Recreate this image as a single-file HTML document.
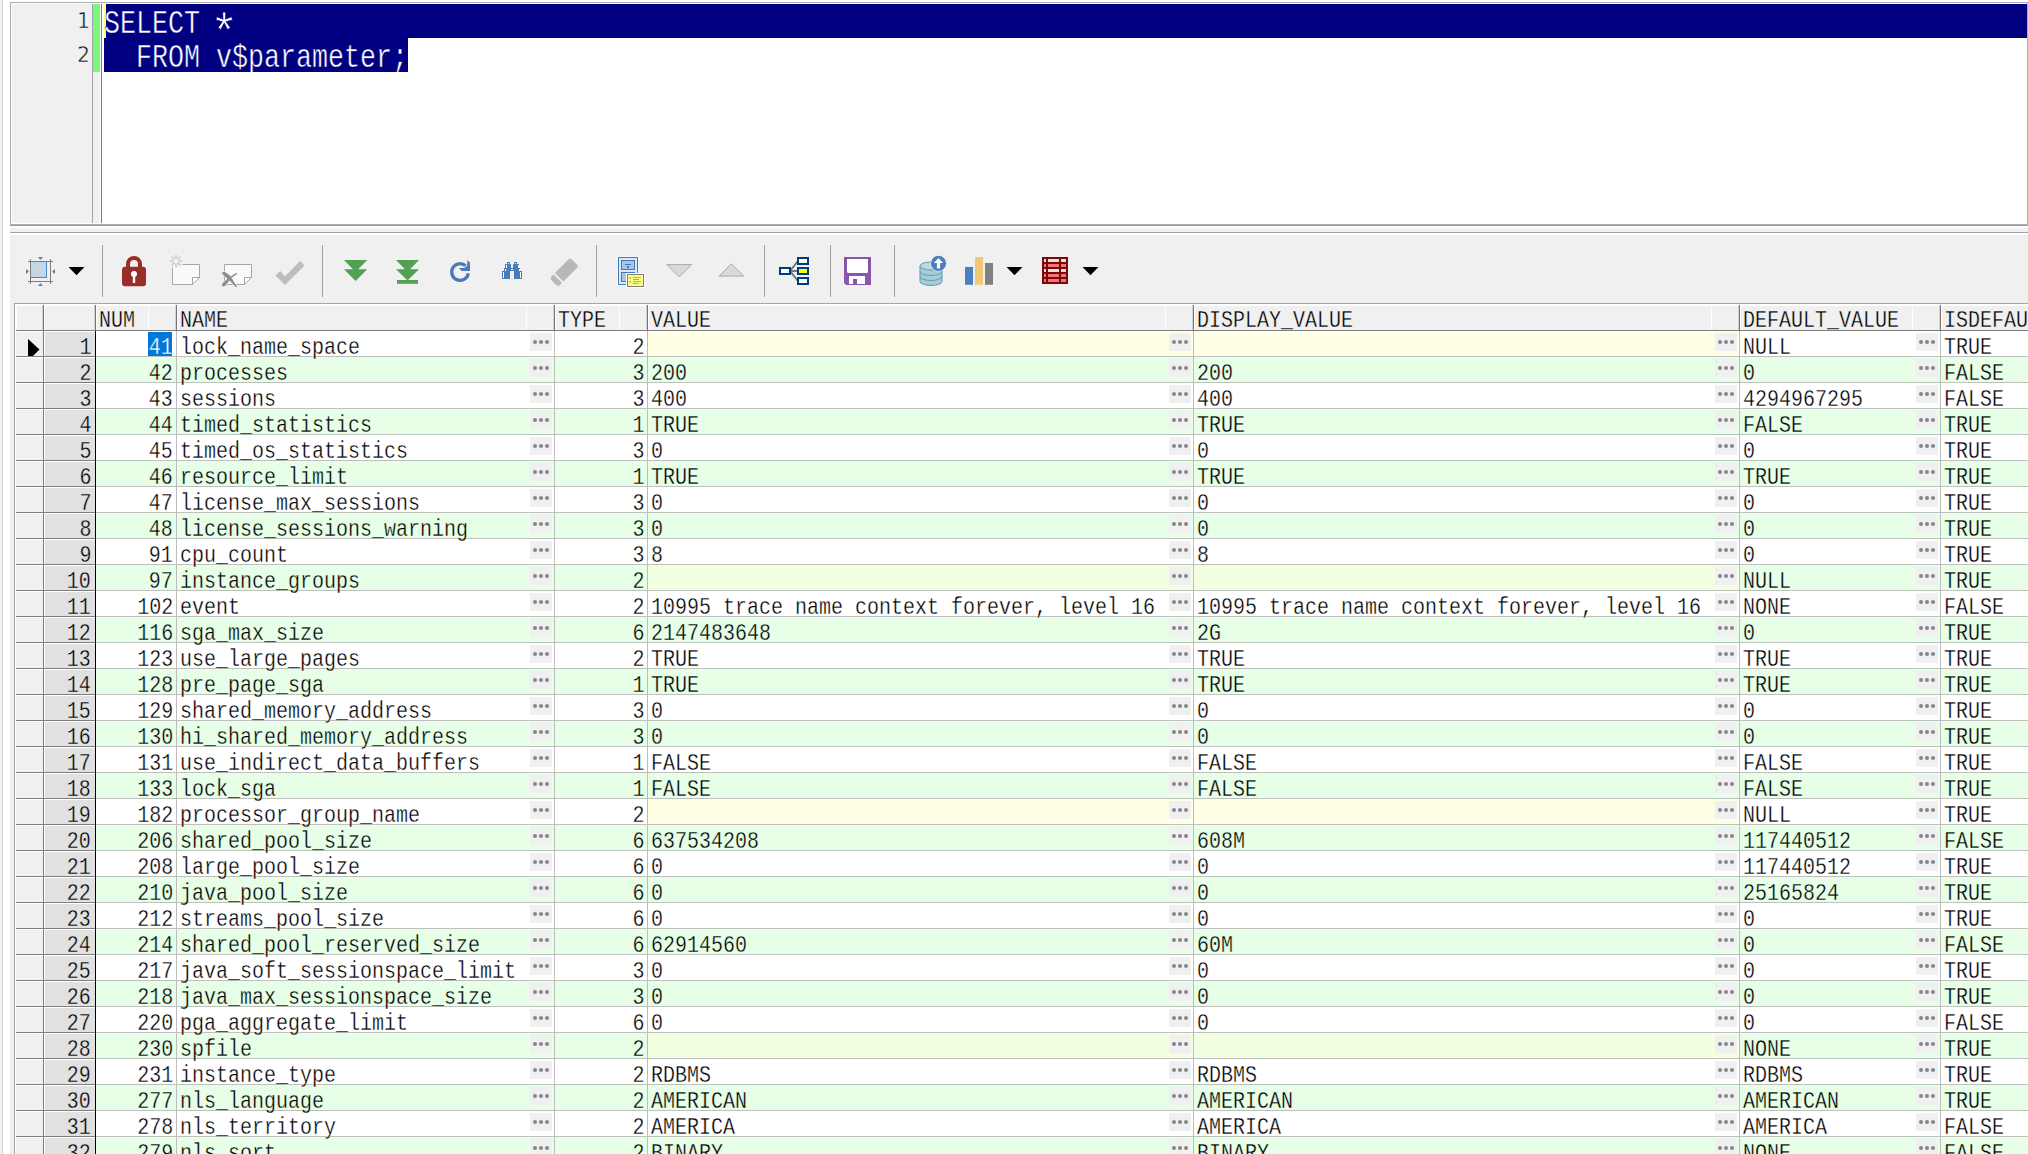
<!DOCTYPE html>
<html lang="en">
<head>
<meta charset="utf-8">
<title>SQL Window - SELECT * FROM v$parameter</title>
<style>
html,body{margin:0;padding:0;}
body{width:2028px;height:1154px;overflow:hidden;background:#fff;position:relative;font-family:"Liberation Mono",monospace;color:#000;}
div,span{box-sizing:border-box;}
.abs{position:absolute;}
#leftedge{position:absolute;left:0;top:0;width:3px;height:1154px;background:#f0f0f0;border-right:1px solid #d6d6d6;}
#editor{position:absolute;left:10px;top:2px;width:2018px;height:223px;border:1px solid #abadb3;background:#fff;overflow:hidden;}
#editorshadow{position:absolute;left:10px;top:225px;width:2018px;height:1px;background:#9c9c9c;}
#gutter{position:absolute;left:1px;top:1px;width:80px;height:219px;background:#f0f0f0;}
#gutline1{position:absolute;left:81px;top:1px;width:1px;height:219px;background:#a6a0a8;}
#modbar{position:absolute;left:82px;top:1px;width:7px;height:68px;background:#79f879;}
#gutpad{position:absolute;left:82px;top:69px;width:7px;height:151px;background:#f0f0f0;}
#gutline2{position:absolute;left:90px;top:1px;width:1px;height:219px;background:#7a7a7a;}
.lnum{position:absolute;left:1px;width:78px;text-align:right;font-family:"DejaVu Sans","Liberation Sans",sans-serif;font-size:20.5px;line-height:34px;height:34px;color:#111;}
.sel{position:absolute;background:#000080;height:34px;}
.ast{display:inline-block;transform:translateY(10px) scale(1.75,1.5);}
.lnum{-webkit-text-stroke:.5px #f0f0f0;}
.codeline{position:absolute;left:93px;height:34px;width:1923px;overflow:hidden;}
.code{position:absolute;left:0;top:0;height:34px;line-height:34px;font-size:33.5px;color:#fff;white-space:pre;transform:scaleX(.7959);transform-origin:0 50%;margin-top:2.5px;}
#caret{position:absolute;left:93px;top:1px;width:2px;height:34px;background:#ffff7a;}
#splitter{position:absolute;left:10px;top:228px;width:2018px;height:4px;background:#f0f0f0;}
#panel{position:absolute;left:10px;top:232px;width:2018px;height:922px;background:#f0f0f0;border-top:1px solid #a0a0a0;}
#panelhl{position:absolute;left:0;top:0;width:2018px;height:2px;background:#fff;}
.tsep{position:absolute;top:12px;width:1px;height:52px;background:#a0a0a0;}
#icons{position:absolute;left:0;top:0;}
#grid{position:absolute;left:14px;top:303px;width:2030px;height:900px;border:1px solid #a2a5ad;background:#fff;overflow:hidden;font-size:24px;}
.t{position:absolute;z-index:1;white-space:pre;line-height:26px;height:26px;transform:scaleX(.83333);}
.tl{transform-origin:0 50%;}
.tr{transform-origin:100% 50%;}
.hc{position:absolute;top:2px;height:24px;background:#f0f0f0;}
.hs{position:absolute;top:1px;width:1px;height:26px;background:#747474;box-shadow:-1px 0 0 #d4d4d4;}
.hw{position:absolute;top:2px;width:1px;height:24px;background:#fff;}
.row{position:absolute;left:0;width:2030px;height:26px;}
.ind{position:absolute;left:1px;top:1px;width:27px;height:24px;background:#f0f0f0;}
.rn{position:absolute;left:30px;top:1px;width:50px;height:24px;background:#e1e1e1;}
.fl{position:absolute;left:1px;top:25px;width:79px;height:1px;background:#7e7e7e;}
.fv{position:absolute;left:28px;top:0;width:1px;height:26px;background:#7e7e7e;}
.c{position:absolute;top:0;height:25px;}
.even .c{background:#e6ffe6;}
.odd .c{background:#fff;}
.odd .c.n{background:#ffffe6;}
.even .c.n{background:#f2ffe0;}
.hl{position:absolute;left:81px;top:25px;width:1950px;height:1px;background:#bfbfbf;}
.b{position:absolute;top:2px;width:22px;height:18px;background:#f0f0f0;}
.b i{position:absolute;top:7px;width:4px;height:4px;border-radius:2px;background:#868686;}
.vl{position:absolute;top:27px;width:1px;height:900px;background:#bdbdbd;}
#blackline{position:absolute;left:80px;top:27px;width:1px;height:900px;background:#000;}
.selcell{position:absolute;background:#0078d7;}
.t{-webkit-text-stroke:.35px #f0f0f0;}
.row>.t{-webkit-text-stroke:.35px #e1e1e1;}
.code{-webkit-text-stroke:.5px #000080;}
.odd .c .t{-webkit-text-stroke:.35px #fff;}
.even .c .t{-webkit-text-stroke:.35px #e6ffe6;}

</style>
</head>
<body>
<div id="leftedge"></div>

<div id="editor">
<div id="gutter"></div><div id="gutline1"></div><div id="modbar"></div><div id="gutpad"></div><div id="gutline2"></div>
<div class="lnum" style="top:1px">1</div><div class="lnum" style="top:35px">2</div>
<div class="sel" style="left:93px;top:1px;width:1923px"></div>
<div class="sel" style="left:93px;top:35px;width:304px"></div>
<div id="caret"></div>
<div class="codeline" style="top:1px"><div class="code">SELECT <span class="ast">*</span></div></div>
<div class="codeline" style="top:35px"><div class="code">  FROM v$parameter;</div></div>
</div>
<div id="editorshadow"></div>
<div id="splitter"></div>
<div id="panel"><div id="panelhl"></div>
<div class="tsep" style="left:92px"></div>
<div class="tsep" style="left:312px"></div>
<div class="tsep" style="left:586px"></div>
<div class="tsep" style="left:754px"></div>
<div class="tsep" style="left:820px"></div>
<div class="tsep" style="left:884px"></div>
</div>
<svg id="icons" class="abs" width="2028" height="310" viewBox="0 0 2028 310">
<!-- select/fit icon -->
<g shape-rendering="crispEdges">
<rect x="31" y="262" width="16" height="16" fill="#c6d6e6"/>
<rect x="46" y="262" width="1" height="16" fill="#4a86c8"/>
<rect x="31" y="277" width="16" height="1" fill="#4a86c8"/>
<rect x="30" y="259" width="1" height="25" fill="#7d7d7d"/>
<rect x="50" y="259" width="1" height="25" fill="#7d7d7d"/>
<rect x="28" y="261" width="25" height="1" fill="#7d7d7d"/>
<rect x="28" y="281" width="25" height="1" fill="#7d7d7d"/>
</g>
<polygon points="38,257 43,257 40.5,260" fill="#4a86c8"/>
<polygon points="38,286 43,286 40.5,283" fill="#4a86c8"/>
<polygon points="26,269 26,274 29,271.5" fill="#4a86c8"/>
<polygon points="55,269 55,274 52,271.5" fill="#4a86c8"/>
<!-- dropdown arrows -->
<polygon points="68.5,267 84.5,267 76.5,275.2" fill="#000"/>
<polygon points="1006.5,267 1022.5,267 1014.5,275.2" fill="#000"/>
<polygon points="1082.5,267 1098.5,267 1090.5,275.2" fill="#000"/>
<!-- lock -->
<path d="M126,267 v-3 a8,8 0 0 1 16,0 v3 h-4 v-3 a4,4 0 0 0 -8,0 v3 z" fill="#9b2d27"/>
<rect x="122" y="266.8" width="24" height="19.4" rx="3" fill="#9b2d27"/>
<circle cx="134" cy="274" r="3" fill="#fff"/>
<rect x="132.8" y="275" width="2.4" height="8" fill="#fff"/>
<!-- new record -->
<path d="M172.5,264.5 h27 v13 l-7,7 h-20 z" fill="#fafafa"/>
<path d="M199.5,277.5 h-7 v7 z" fill="#fff"/>
<path d="M199.5,277.5 h-7 v7 M172.5,264.5 h27 v13 l-7,7 h-20 z" fill="none" stroke="#a6a6a6" stroke-width="1"/>
<circle cx="176" cy="261" r="7.3" fill="#f0f0f0"/>
<g stroke="#cfcfcf" stroke-width="1.9">
<line x1="176" y1="255" x2="176" y2="267"/><line x1="170" y1="261" x2="182" y2="261"/>
<line x1="171.6" y1="256.6" x2="180.4" y2="265.4"/><line x1="180.4" y1="256.6" x2="171.6" y2="265.4"/>
</g>
<circle cx="176" cy="261" r="2.7" fill="#f3f3f3" stroke="#d2d2d2" stroke-width="0.8"/>
<!-- delete record -->
<path d="M224.5,264.5 h27 v13 l-7,7 h-20 z" fill="#fafafa"/>
<path d="M251.5,277.5 h-7 v7 z" fill="#fff"/>
<path d="M251.5,277.5 h-7 v7 M224.5,264.5 h27 v13 l-7,7 h-20 z" fill="none" stroke="#a6a6a6" stroke-width="1"/>
<g fill="#8e8e8e" stroke="#f0f0f0" stroke-width="1.6" paint-order="stroke" stroke-linejoin="round">
<path d="M236.8,272.9 L237,273.7 L231,278 L226,284.8 Q224,287 222.5,286 Q221.4,284.6 223,283 L229.5,277.2 Z"/>
<path d="M222.3,273.8 Q221.8,271.9 224.2,272 Q227,272.8 230,276 L237,287 L236,287 L228.5,279.2 Q224,275.5 222.3,273.8 Z"/>
</g>
<g fill="#8e8e8e">
<path d="M236.8,272.9 L237,273.7 L231,278 L226,284.8 Q224,287 222.5,286 Q221.4,284.6 223,283 L229.5,277.2 Z"/>
<path d="M222.3,273.8 Q221.8,271.9 224.2,272 Q227,272.8 230,276 L237,287 L236,287 L228.5,279.2 Q224,275.5 222.3,273.8 Z"/>
</g>
<!-- check -->
<polygon points="275.5,275.5 280.2,271 285,276.2 300.2,261 304.6,265.4 285,285" fill="#bdbdbd"/>
<!-- fetch next -->
<polygon points="344,260 367.2,260 355.6,272" fill="#52a052"/>
<polygon points="344,269.2 367.2,269.2 355.6,281" fill="#52a052"/>
<!-- fetch last -->
<polygon points="396,260 419,260 407.5,272" fill="#52a052"/>
<polygon points="396,269.2 419,269.2 407.5,280.5" fill="#52a052"/>
<rect x="397" y="280" width="21" height="3.8" fill="#52a052"/>
<!-- refresh -->
<path d="M468.3,273.2 A8.35,8.35 0 1 1 465.6,265.8" fill="none" stroke="#4a7ab5" stroke-width="3.3"/>
<polygon points="467.4,259.9 470,262.8 470,271 461.7,271 458.9,268 464.5,268 467.2,265.5" fill="#4a7ab5"/>
<!-- binoculars -->
<g fill="#4a7db5" shape-rendering="crispEdges">
<rect x="507" y="262" width="3" height="2"/><rect x="514" y="262" width="3" height="2"/>
<rect x="505" y="264" width="6" height="4"/><rect x="513" y="264" width="6" height="4"/>
<rect x="504" y="268" width="16" height="3"/>
<rect x="502" y="271" width="8" height="8"/><rect x="514" y="271" width="8" height="8"/>
</g>
<g fill="#fff" shape-rendering="crispEdges">
<rect x="508" y="263" width="1" height="1"/><rect x="515" y="263" width="1" height="1"/>
<rect x="506" y="265" width="1" height="3"/><rect x="518" y="265" width="1" height="3"/>
<rect x="505" y="269" width="1" height="2"/><rect x="519" y="269" width="1" height="2"/>
<rect x="511" y="269" width="2" height="1"/>
<rect x="503" y="272" width="1" height="6"/><rect x="520" y="272" width="1" height="6"/>
</g>
<!-- eraser -->
<g transform="translate(564.1,272.3) rotate(-45)">
<path d="M-11.5,-6 H12.7 Q14.5,-6 14.5,-4.2 V4.2 Q14.5,6 12.7,6 H-11.5 Q-14.6,6 -14.6,3 V-3 Q-14.6,-6 -11.5,-6 Z" fill="#b8b8b8"/>
<rect x="-9" y="-7" width="1.9" height="14" fill="#f0f0f0"/>
</g>
<!-- cabinet + note -->
<rect x="617.5" y="256.5" width="21" height="29" fill="none" stroke="#fff" stroke-width="1" opacity=".6"/>
<rect x="618.5" y="257.5" width="19" height="27" fill="#dbeafa" stroke="#3d7ab8" stroke-width="1"/>
<rect x="621.5" y="260.5" width="13" height="9" fill="#a9c5e1" stroke="#3d7ab8" stroke-width="1"/>
<rect x="621.5" y="272.5" width="13" height="9" fill="#a9c5e1" stroke="#3d7ab8" stroke-width="1"/>
<rect x="625" y="264" width="6" height="1" fill="#3d7ab8"/><rect x="627" y="266" width="2" height="2" fill="#3d7ab8"/>
<rect x="626.5" y="273.5" width="18" height="14" fill="none" stroke="#fff" stroke-width="1"/>
<rect x="627.5" y="274.5" width="16" height="12" fill="#ffff82" stroke="#7c7c7c" stroke-width="1"/>
<g fill="#9a9abf"><rect x="629.3" y="277" width="1.6" height="1.6"/><rect x="629.3" y="281" width="1.6" height="1.6"/>
<rect x="633" y="277" width="8" height="0.9"/><rect x="633" y="279" width="6" height="0.9"/><rect x="633" y="281" width="8" height="0.9"/><rect x="633" y="283" width="6" height="0.9"/></g>
<!-- gray triangles -->
<polygon points="667,264.6 691.6,264.6 679.3,276.9" fill="#d9d9d9" stroke="#a9a9a9" stroke-width="1"/>
<polygon points="719.1,276.1 743.7,276.1 731.4,263.8" fill="#d9d9d9" stroke="#a9a9a9" stroke-width="1"/>
<!-- tree -->
<g stroke="#6c6c6c" stroke-width="1.8"><line x1="790" y1="271" x2="798" y2="261"/><line x1="790" y1="271" x2="798" y2="271"/><line x1="790" y1="271" x2="798" y2="281"/></g>
<g stroke="#003a80" stroke-width="2" shape-rendering="crispEdges">
<rect x="780" y="268" width="10" height="6" fill="#fff"/>
<rect x="798" y="258" width="10" height="6" fill="#fff"/>
<rect x="798" y="268" width="10" height="6" fill="#ffff00"/>
<rect x="798" y="278" width="10" height="6" fill="#fff"/>
</g>
<!-- floppy -->
<path d="M844,257 h27 v28 h-25 l-2,-2 z" fill="#8a55aa"/>
<path d="M847,259 h21 v12.5 q0,1.5 -1.5,1.5 h-18 q-1.5,0 -1.5,-1.5 z" fill="#fff"/>
<path d="M849,276 h16 v8 h-8 v-5 h-4 v5 h-4 z" fill="#fff"/>
<!-- db upload -->
<g fill="#a9cbd9" stroke="#5f9eb0" stroke-width="1">
<path d="M920,266 v15.5 a11,4 0 0 0 22,0 v-15.5 z"/>
<path d="M920,276.5 a11,4 0 0 0 22,0" fill="none"/>
<path d="M920,271.5 a11,4 0 0 0 22,0" fill="none"/>
<ellipse cx="931" cy="266" rx="11" ry="4" fill="#bcd9e4"/>
</g>
<circle cx="938.5" cy="263.4" r="8.2" fill="#f0f0f0"/>
<circle cx="938.5" cy="263.4" r="7.6" fill="#4a80bd"/>
<path d="M938.5,258 l4.6,5 h-3 v5.5 h-3.2 v-5.5 h-3 z" fill="#fff"/>
<!-- bar chart -->
<rect x="965" y="267" width="8" height="17.8" fill="#4a80bd"/>
<rect x="975" y="257" width="8" height="27.8" fill="#f0c878"/>
<rect x="985" y="263" width="8" height="21.8" fill="#808080"/>
<!-- red table -->
<g shape-rendering="crispEdges">
<rect x="1042" y="257" width="26" height="27" fill="#7a0a0a"/>
<g fill="#e2e2e2"><rect x="1044" y="259" width="2" height="3"/><rect x="1048" y="259" width="11" height="3"/><rect x="1061" y="259" width="5" height="3"/>
<rect x="1044" y="269" width="2" height="3"/><rect x="1048" y="269" width="11" height="3"/><rect x="1061" y="269" width="5" height="3"/></g>
<g fill="#f87272"><rect x="1044" y="264" width="2" height="3"/><rect x="1048" y="264" width="11" height="3"/><rect x="1061" y="264" width="5" height="3"/>
<rect x="1044" y="274" width="2" height="3"/><rect x="1048" y="274" width="11" height="3"/><rect x="1061" y="274" width="5" height="3"/>
<rect x="1044" y="279" width="2" height="3"/><rect x="1048" y="279" width="11" height="3"/><rect x="1061" y="279" width="5" height="3"/></g>
</g>

</svg>
<div id="grid">
<div class="abs" style="left:0;top:0;width:2030px;height:27px;background:#fff"></div>
<div class="hc" style="left:2px;width:26px"></div>
<div class="hc" style="left:30px;width:50px"></div>
<div class="hc" style="left:82px;width:79px"></div>
<div class="hw" style="left:133px"></div>
<span class="t tl" style="left:84px;top:4px">NUM</span>
<div class="hc" style="left:163px;width:376px"></div>
<div class="hw" style="left:511px"></div>
<span class="t tl" style="left:165px;top:4px">NAME</span>
<div class="hc" style="left:541px;width:91px"></div>
<div class="hw" style="left:604px"></div>
<span class="t tl" style="left:543px;top:4px">TYPE</span>
<div class="hc" style="left:634px;width:544px"></div>
<div class="hw" style="left:1150px"></div>
<span class="t tl" style="left:636px;top:4px">VALUE</span>
<div class="hc" style="left:1180px;width:544px"></div>
<div class="hw" style="left:1696px"></div>
<span class="t tl" style="left:1182px;top:4px">DISPLAY_VALUE</span>
<div class="hc" style="left:1726px;width:199px"></div>
<div class="hw" style="left:1897px"></div>
<span class="t tl" style="left:1728px;top:4px">DEFAULT_VALUE</span>
<div class="hc" style="left:1927px;width:118px"></div>
<div class="hw" style="left:2017px"></div>
<span class="t tl" style="left:1929px;top:4px">ISDEFAULT</span>
<div class="hs" style="left:28px"></div>
<div class="hs" style="left:80px"></div>
<div class="hs" style="left:161px"></div>
<div class="hs" style="left:539px"></div>
<div class="hs" style="left:632px"></div>
<div class="hs" style="left:1178px"></div>
<div class="hs" style="left:1724px"></div>
<div class="hs" style="left:1925px"></div>
<div class="abs" style="left:1px;top:26px;width:2030px;height:1px;background:#7e7e7e"></div>
<div class="row odd" style="top:27px">
<div class="ind"></div><div class="rn"></div><div class="fv"></div><div class="fl"></div>
<span class="t tr" style="right:1954px;top:4px">1</span>
<div class="c" style="left:81px;width:80px">
<div class="selcell" style="left:52px;top:1px;width:24px;height:24px"></div>
<span class="t tr" style="right:3px;top:4px;color:#fff;-webkit-text-stroke:.35px #0078d7">41</span>
</div>
<div class="c" style="left:162px;width:377px">
<span class="t tl" style="left:3px;top:4px">lock_name_space</span>
<div class="b" style="left:353px"><i style="left:3px"></i><i style="left:9px"></i><i style="left:15px"></i></div>
</div>
<div class="c" style="left:540px;width:92px">
<span class="t tr" style="right:3px;top:4px">2</span>
</div>
<div class="c n" style="left:633px;width:545px">
<div class="b" style="left:521px"><i style="left:3px"></i><i style="left:9px"></i><i style="left:15px"></i></div>
</div>
<div class="c n" style="left:1179px;width:545px">
<div class="b" style="left:521px"><i style="left:3px"></i><i style="left:9px"></i><i style="left:15px"></i></div>
</div>
<div class="c" style="left:1725px;width:200px">
<span class="t tl" style="left:3px;top:4px">NULL</span>
<div class="b" style="left:176px"><i style="left:3px"></i><i style="left:9px"></i><i style="left:15px"></i></div>
</div>
<div class="c" style="left:1926px;width:119px">
<span class="t tl" style="left:3px;top:4px">TRUE</span>
</div>
<div class="hl"></div>
</div>
<div class="row even" style="top:53px">
<div class="ind"></div><div class="rn"></div><div class="fv"></div><div class="fl"></div>
<span class="t tr" style="right:1954px;top:4px">2</span>
<div class="c" style="left:81px;width:80px">
<span class="t tr" style="right:3px;top:4px">42</span>
</div>
<div class="c" style="left:162px;width:377px">
<span class="t tl" style="left:3px;top:4px">processes</span>
<div class="b" style="left:353px"><i style="left:3px"></i><i style="left:9px"></i><i style="left:15px"></i></div>
</div>
<div class="c" style="left:540px;width:92px">
<span class="t tr" style="right:3px;top:4px">3</span>
</div>
<div class="c" style="left:633px;width:545px">
<span class="t tl" style="left:3px;top:4px">200</span>
<div class="b" style="left:521px"><i style="left:3px"></i><i style="left:9px"></i><i style="left:15px"></i></div>
</div>
<div class="c" style="left:1179px;width:545px">
<span class="t tl" style="left:3px;top:4px">200</span>
<div class="b" style="left:521px"><i style="left:3px"></i><i style="left:9px"></i><i style="left:15px"></i></div>
</div>
<div class="c" style="left:1725px;width:200px">
<span class="t tl" style="left:3px;top:4px">0</span>
<div class="b" style="left:176px"><i style="left:3px"></i><i style="left:9px"></i><i style="left:15px"></i></div>
</div>
<div class="c" style="left:1926px;width:119px">
<span class="t tl" style="left:3px;top:4px">FALSE</span>
</div>
<div class="hl"></div>
</div>
<div class="row odd" style="top:79px">
<div class="ind"></div><div class="rn"></div><div class="fv"></div><div class="fl"></div>
<span class="t tr" style="right:1954px;top:4px">3</span>
<div class="c" style="left:81px;width:80px">
<span class="t tr" style="right:3px;top:4px">43</span>
</div>
<div class="c" style="left:162px;width:377px">
<span class="t tl" style="left:3px;top:4px">sessions</span>
<div class="b" style="left:353px"><i style="left:3px"></i><i style="left:9px"></i><i style="left:15px"></i></div>
</div>
<div class="c" style="left:540px;width:92px">
<span class="t tr" style="right:3px;top:4px">3</span>
</div>
<div class="c" style="left:633px;width:545px">
<span class="t tl" style="left:3px;top:4px">400</span>
<div class="b" style="left:521px"><i style="left:3px"></i><i style="left:9px"></i><i style="left:15px"></i></div>
</div>
<div class="c" style="left:1179px;width:545px">
<span class="t tl" style="left:3px;top:4px">400</span>
<div class="b" style="left:521px"><i style="left:3px"></i><i style="left:9px"></i><i style="left:15px"></i></div>
</div>
<div class="c" style="left:1725px;width:200px">
<span class="t tl" style="left:3px;top:4px">4294967295</span>
<div class="b" style="left:176px"><i style="left:3px"></i><i style="left:9px"></i><i style="left:15px"></i></div>
</div>
<div class="c" style="left:1926px;width:119px">
<span class="t tl" style="left:3px;top:4px">FALSE</span>
</div>
<div class="hl"></div>
</div>
<div class="row even" style="top:105px">
<div class="ind"></div><div class="rn"></div><div class="fv"></div><div class="fl"></div>
<span class="t tr" style="right:1954px;top:4px">4</span>
<div class="c" style="left:81px;width:80px">
<span class="t tr" style="right:3px;top:4px">44</span>
</div>
<div class="c" style="left:162px;width:377px">
<span class="t tl" style="left:3px;top:4px">timed_statistics</span>
<div class="b" style="left:353px"><i style="left:3px"></i><i style="left:9px"></i><i style="left:15px"></i></div>
</div>
<div class="c" style="left:540px;width:92px">
<span class="t tr" style="right:3px;top:4px">1</span>
</div>
<div class="c" style="left:633px;width:545px">
<span class="t tl" style="left:3px;top:4px">TRUE</span>
<div class="b" style="left:521px"><i style="left:3px"></i><i style="left:9px"></i><i style="left:15px"></i></div>
</div>
<div class="c" style="left:1179px;width:545px">
<span class="t tl" style="left:3px;top:4px">TRUE</span>
<div class="b" style="left:521px"><i style="left:3px"></i><i style="left:9px"></i><i style="left:15px"></i></div>
</div>
<div class="c" style="left:1725px;width:200px">
<span class="t tl" style="left:3px;top:4px">FALSE</span>
<div class="b" style="left:176px"><i style="left:3px"></i><i style="left:9px"></i><i style="left:15px"></i></div>
</div>
<div class="c" style="left:1926px;width:119px">
<span class="t tl" style="left:3px;top:4px">TRUE</span>
</div>
<div class="hl"></div>
</div>
<div class="row odd" style="top:131px">
<div class="ind"></div><div class="rn"></div><div class="fv"></div><div class="fl"></div>
<span class="t tr" style="right:1954px;top:4px">5</span>
<div class="c" style="left:81px;width:80px">
<span class="t tr" style="right:3px;top:4px">45</span>
</div>
<div class="c" style="left:162px;width:377px">
<span class="t tl" style="left:3px;top:4px">timed_os_statistics</span>
<div class="b" style="left:353px"><i style="left:3px"></i><i style="left:9px"></i><i style="left:15px"></i></div>
</div>
<div class="c" style="left:540px;width:92px">
<span class="t tr" style="right:3px;top:4px">3</span>
</div>
<div class="c" style="left:633px;width:545px">
<span class="t tl" style="left:3px;top:4px">0</span>
<div class="b" style="left:521px"><i style="left:3px"></i><i style="left:9px"></i><i style="left:15px"></i></div>
</div>
<div class="c" style="left:1179px;width:545px">
<span class="t tl" style="left:3px;top:4px">0</span>
<div class="b" style="left:521px"><i style="left:3px"></i><i style="left:9px"></i><i style="left:15px"></i></div>
</div>
<div class="c" style="left:1725px;width:200px">
<span class="t tl" style="left:3px;top:4px">0</span>
<div class="b" style="left:176px"><i style="left:3px"></i><i style="left:9px"></i><i style="left:15px"></i></div>
</div>
<div class="c" style="left:1926px;width:119px">
<span class="t tl" style="left:3px;top:4px">TRUE</span>
</div>
<div class="hl"></div>
</div>
<div class="row even" style="top:157px">
<div class="ind"></div><div class="rn"></div><div class="fv"></div><div class="fl"></div>
<span class="t tr" style="right:1954px;top:4px">6</span>
<div class="c" style="left:81px;width:80px">
<span class="t tr" style="right:3px;top:4px">46</span>
</div>
<div class="c" style="left:162px;width:377px">
<span class="t tl" style="left:3px;top:4px">resource_limit</span>
<div class="b" style="left:353px"><i style="left:3px"></i><i style="left:9px"></i><i style="left:15px"></i></div>
</div>
<div class="c" style="left:540px;width:92px">
<span class="t tr" style="right:3px;top:4px">1</span>
</div>
<div class="c" style="left:633px;width:545px">
<span class="t tl" style="left:3px;top:4px">TRUE</span>
<div class="b" style="left:521px"><i style="left:3px"></i><i style="left:9px"></i><i style="left:15px"></i></div>
</div>
<div class="c" style="left:1179px;width:545px">
<span class="t tl" style="left:3px;top:4px">TRUE</span>
<div class="b" style="left:521px"><i style="left:3px"></i><i style="left:9px"></i><i style="left:15px"></i></div>
</div>
<div class="c" style="left:1725px;width:200px">
<span class="t tl" style="left:3px;top:4px">TRUE</span>
<div class="b" style="left:176px"><i style="left:3px"></i><i style="left:9px"></i><i style="left:15px"></i></div>
</div>
<div class="c" style="left:1926px;width:119px">
<span class="t tl" style="left:3px;top:4px">TRUE</span>
</div>
<div class="hl"></div>
</div>
<div class="row odd" style="top:183px">
<div class="ind"></div><div class="rn"></div><div class="fv"></div><div class="fl"></div>
<span class="t tr" style="right:1954px;top:4px">7</span>
<div class="c" style="left:81px;width:80px">
<span class="t tr" style="right:3px;top:4px">47</span>
</div>
<div class="c" style="left:162px;width:377px">
<span class="t tl" style="left:3px;top:4px">license_max_sessions</span>
<div class="b" style="left:353px"><i style="left:3px"></i><i style="left:9px"></i><i style="left:15px"></i></div>
</div>
<div class="c" style="left:540px;width:92px">
<span class="t tr" style="right:3px;top:4px">3</span>
</div>
<div class="c" style="left:633px;width:545px">
<span class="t tl" style="left:3px;top:4px">0</span>
<div class="b" style="left:521px"><i style="left:3px"></i><i style="left:9px"></i><i style="left:15px"></i></div>
</div>
<div class="c" style="left:1179px;width:545px">
<span class="t tl" style="left:3px;top:4px">0</span>
<div class="b" style="left:521px"><i style="left:3px"></i><i style="left:9px"></i><i style="left:15px"></i></div>
</div>
<div class="c" style="left:1725px;width:200px">
<span class="t tl" style="left:3px;top:4px">0</span>
<div class="b" style="left:176px"><i style="left:3px"></i><i style="left:9px"></i><i style="left:15px"></i></div>
</div>
<div class="c" style="left:1926px;width:119px">
<span class="t tl" style="left:3px;top:4px">TRUE</span>
</div>
<div class="hl"></div>
</div>
<div class="row even" style="top:209px">
<div class="ind"></div><div class="rn"></div><div class="fv"></div><div class="fl"></div>
<span class="t tr" style="right:1954px;top:4px">8</span>
<div class="c" style="left:81px;width:80px">
<span class="t tr" style="right:3px;top:4px">48</span>
</div>
<div class="c" style="left:162px;width:377px">
<span class="t tl" style="left:3px;top:4px">license_sessions_warning</span>
<div class="b" style="left:353px"><i style="left:3px"></i><i style="left:9px"></i><i style="left:15px"></i></div>
</div>
<div class="c" style="left:540px;width:92px">
<span class="t tr" style="right:3px;top:4px">3</span>
</div>
<div class="c" style="left:633px;width:545px">
<span class="t tl" style="left:3px;top:4px">0</span>
<div class="b" style="left:521px"><i style="left:3px"></i><i style="left:9px"></i><i style="left:15px"></i></div>
</div>
<div class="c" style="left:1179px;width:545px">
<span class="t tl" style="left:3px;top:4px">0</span>
<div class="b" style="left:521px"><i style="left:3px"></i><i style="left:9px"></i><i style="left:15px"></i></div>
</div>
<div class="c" style="left:1725px;width:200px">
<span class="t tl" style="left:3px;top:4px">0</span>
<div class="b" style="left:176px"><i style="left:3px"></i><i style="left:9px"></i><i style="left:15px"></i></div>
</div>
<div class="c" style="left:1926px;width:119px">
<span class="t tl" style="left:3px;top:4px">TRUE</span>
</div>
<div class="hl"></div>
</div>
<div class="row odd" style="top:235px">
<div class="ind"></div><div class="rn"></div><div class="fv"></div><div class="fl"></div>
<span class="t tr" style="right:1954px;top:4px">9</span>
<div class="c" style="left:81px;width:80px">
<span class="t tr" style="right:3px;top:4px">91</span>
</div>
<div class="c" style="left:162px;width:377px">
<span class="t tl" style="left:3px;top:4px">cpu_count</span>
<div class="b" style="left:353px"><i style="left:3px"></i><i style="left:9px"></i><i style="left:15px"></i></div>
</div>
<div class="c" style="left:540px;width:92px">
<span class="t tr" style="right:3px;top:4px">3</span>
</div>
<div class="c" style="left:633px;width:545px">
<span class="t tl" style="left:3px;top:4px">8</span>
<div class="b" style="left:521px"><i style="left:3px"></i><i style="left:9px"></i><i style="left:15px"></i></div>
</div>
<div class="c" style="left:1179px;width:545px">
<span class="t tl" style="left:3px;top:4px">8</span>
<div class="b" style="left:521px"><i style="left:3px"></i><i style="left:9px"></i><i style="left:15px"></i></div>
</div>
<div class="c" style="left:1725px;width:200px">
<span class="t tl" style="left:3px;top:4px">0</span>
<div class="b" style="left:176px"><i style="left:3px"></i><i style="left:9px"></i><i style="left:15px"></i></div>
</div>
<div class="c" style="left:1926px;width:119px">
<span class="t tl" style="left:3px;top:4px">TRUE</span>
</div>
<div class="hl"></div>
</div>
<div class="row even" style="top:261px">
<div class="ind"></div><div class="rn"></div><div class="fv"></div><div class="fl"></div>
<span class="t tr" style="right:1954px;top:4px">10</span>
<div class="c" style="left:81px;width:80px">
<span class="t tr" style="right:3px;top:4px">97</span>
</div>
<div class="c" style="left:162px;width:377px">
<span class="t tl" style="left:3px;top:4px">instance_groups</span>
<div class="b" style="left:353px"><i style="left:3px"></i><i style="left:9px"></i><i style="left:15px"></i></div>
</div>
<div class="c" style="left:540px;width:92px">
<span class="t tr" style="right:3px;top:4px">2</span>
</div>
<div class="c n" style="left:633px;width:545px">
<div class="b" style="left:521px"><i style="left:3px"></i><i style="left:9px"></i><i style="left:15px"></i></div>
</div>
<div class="c n" style="left:1179px;width:545px">
<div class="b" style="left:521px"><i style="left:3px"></i><i style="left:9px"></i><i style="left:15px"></i></div>
</div>
<div class="c" style="left:1725px;width:200px">
<span class="t tl" style="left:3px;top:4px">NULL</span>
<div class="b" style="left:176px"><i style="left:3px"></i><i style="left:9px"></i><i style="left:15px"></i></div>
</div>
<div class="c" style="left:1926px;width:119px">
<span class="t tl" style="left:3px;top:4px">TRUE</span>
</div>
<div class="hl"></div>
</div>
<div class="row odd" style="top:287px">
<div class="ind"></div><div class="rn"></div><div class="fv"></div><div class="fl"></div>
<span class="t tr" style="right:1954px;top:4px">11</span>
<div class="c" style="left:81px;width:80px">
<span class="t tr" style="right:3px;top:4px">102</span>
</div>
<div class="c" style="left:162px;width:377px">
<span class="t tl" style="left:3px;top:4px">event</span>
<div class="b" style="left:353px"><i style="left:3px"></i><i style="left:9px"></i><i style="left:15px"></i></div>
</div>
<div class="c" style="left:540px;width:92px">
<span class="t tr" style="right:3px;top:4px">2</span>
</div>
<div class="c" style="left:633px;width:545px">
<span class="t tl" style="left:3px;top:4px">10995 trace name context forever, level 16</span>
<div class="b" style="left:521px"><i style="left:3px"></i><i style="left:9px"></i><i style="left:15px"></i></div>
</div>
<div class="c" style="left:1179px;width:545px">
<span class="t tl" style="left:3px;top:4px">10995 trace name context forever, level 16</span>
<div class="b" style="left:521px"><i style="left:3px"></i><i style="left:9px"></i><i style="left:15px"></i></div>
</div>
<div class="c" style="left:1725px;width:200px">
<span class="t tl" style="left:3px;top:4px">NONE</span>
<div class="b" style="left:176px"><i style="left:3px"></i><i style="left:9px"></i><i style="left:15px"></i></div>
</div>
<div class="c" style="left:1926px;width:119px">
<span class="t tl" style="left:3px;top:4px">FALSE</span>
</div>
<div class="hl"></div>
</div>
<div class="row even" style="top:313px">
<div class="ind"></div><div class="rn"></div><div class="fv"></div><div class="fl"></div>
<span class="t tr" style="right:1954px;top:4px">12</span>
<div class="c" style="left:81px;width:80px">
<span class="t tr" style="right:3px;top:4px">116</span>
</div>
<div class="c" style="left:162px;width:377px">
<span class="t tl" style="left:3px;top:4px">sga_max_size</span>
<div class="b" style="left:353px"><i style="left:3px"></i><i style="left:9px"></i><i style="left:15px"></i></div>
</div>
<div class="c" style="left:540px;width:92px">
<span class="t tr" style="right:3px;top:4px">6</span>
</div>
<div class="c" style="left:633px;width:545px">
<span class="t tl" style="left:3px;top:4px">2147483648</span>
<div class="b" style="left:521px"><i style="left:3px"></i><i style="left:9px"></i><i style="left:15px"></i></div>
</div>
<div class="c" style="left:1179px;width:545px">
<span class="t tl" style="left:3px;top:4px">2G</span>
<div class="b" style="left:521px"><i style="left:3px"></i><i style="left:9px"></i><i style="left:15px"></i></div>
</div>
<div class="c" style="left:1725px;width:200px">
<span class="t tl" style="left:3px;top:4px">0</span>
<div class="b" style="left:176px"><i style="left:3px"></i><i style="left:9px"></i><i style="left:15px"></i></div>
</div>
<div class="c" style="left:1926px;width:119px">
<span class="t tl" style="left:3px;top:4px">TRUE</span>
</div>
<div class="hl"></div>
</div>
<div class="row odd" style="top:339px">
<div class="ind"></div><div class="rn"></div><div class="fv"></div><div class="fl"></div>
<span class="t tr" style="right:1954px;top:4px">13</span>
<div class="c" style="left:81px;width:80px">
<span class="t tr" style="right:3px;top:4px">123</span>
</div>
<div class="c" style="left:162px;width:377px">
<span class="t tl" style="left:3px;top:4px">use_large_pages</span>
<div class="b" style="left:353px"><i style="left:3px"></i><i style="left:9px"></i><i style="left:15px"></i></div>
</div>
<div class="c" style="left:540px;width:92px">
<span class="t tr" style="right:3px;top:4px">2</span>
</div>
<div class="c" style="left:633px;width:545px">
<span class="t tl" style="left:3px;top:4px">TRUE</span>
<div class="b" style="left:521px"><i style="left:3px"></i><i style="left:9px"></i><i style="left:15px"></i></div>
</div>
<div class="c" style="left:1179px;width:545px">
<span class="t tl" style="left:3px;top:4px">TRUE</span>
<div class="b" style="left:521px"><i style="left:3px"></i><i style="left:9px"></i><i style="left:15px"></i></div>
</div>
<div class="c" style="left:1725px;width:200px">
<span class="t tl" style="left:3px;top:4px">TRUE</span>
<div class="b" style="left:176px"><i style="left:3px"></i><i style="left:9px"></i><i style="left:15px"></i></div>
</div>
<div class="c" style="left:1926px;width:119px">
<span class="t tl" style="left:3px;top:4px">TRUE</span>
</div>
<div class="hl"></div>
</div>
<div class="row even" style="top:365px">
<div class="ind"></div><div class="rn"></div><div class="fv"></div><div class="fl"></div>
<span class="t tr" style="right:1954px;top:4px">14</span>
<div class="c" style="left:81px;width:80px">
<span class="t tr" style="right:3px;top:4px">128</span>
</div>
<div class="c" style="left:162px;width:377px">
<span class="t tl" style="left:3px;top:4px">pre_page_sga</span>
<div class="b" style="left:353px"><i style="left:3px"></i><i style="left:9px"></i><i style="left:15px"></i></div>
</div>
<div class="c" style="left:540px;width:92px">
<span class="t tr" style="right:3px;top:4px">1</span>
</div>
<div class="c" style="left:633px;width:545px">
<span class="t tl" style="left:3px;top:4px">TRUE</span>
<div class="b" style="left:521px"><i style="left:3px"></i><i style="left:9px"></i><i style="left:15px"></i></div>
</div>
<div class="c" style="left:1179px;width:545px">
<span class="t tl" style="left:3px;top:4px">TRUE</span>
<div class="b" style="left:521px"><i style="left:3px"></i><i style="left:9px"></i><i style="left:15px"></i></div>
</div>
<div class="c" style="left:1725px;width:200px">
<span class="t tl" style="left:3px;top:4px">TRUE</span>
<div class="b" style="left:176px"><i style="left:3px"></i><i style="left:9px"></i><i style="left:15px"></i></div>
</div>
<div class="c" style="left:1926px;width:119px">
<span class="t tl" style="left:3px;top:4px">TRUE</span>
</div>
<div class="hl"></div>
</div>
<div class="row odd" style="top:391px">
<div class="ind"></div><div class="rn"></div><div class="fv"></div><div class="fl"></div>
<span class="t tr" style="right:1954px;top:4px">15</span>
<div class="c" style="left:81px;width:80px">
<span class="t tr" style="right:3px;top:4px">129</span>
</div>
<div class="c" style="left:162px;width:377px">
<span class="t tl" style="left:3px;top:4px">shared_memory_address</span>
<div class="b" style="left:353px"><i style="left:3px"></i><i style="left:9px"></i><i style="left:15px"></i></div>
</div>
<div class="c" style="left:540px;width:92px">
<span class="t tr" style="right:3px;top:4px">3</span>
</div>
<div class="c" style="left:633px;width:545px">
<span class="t tl" style="left:3px;top:4px">0</span>
<div class="b" style="left:521px"><i style="left:3px"></i><i style="left:9px"></i><i style="left:15px"></i></div>
</div>
<div class="c" style="left:1179px;width:545px">
<span class="t tl" style="left:3px;top:4px">0</span>
<div class="b" style="left:521px"><i style="left:3px"></i><i style="left:9px"></i><i style="left:15px"></i></div>
</div>
<div class="c" style="left:1725px;width:200px">
<span class="t tl" style="left:3px;top:4px">0</span>
<div class="b" style="left:176px"><i style="left:3px"></i><i style="left:9px"></i><i style="left:15px"></i></div>
</div>
<div class="c" style="left:1926px;width:119px">
<span class="t tl" style="left:3px;top:4px">TRUE</span>
</div>
<div class="hl"></div>
</div>
<div class="row even" style="top:417px">
<div class="ind"></div><div class="rn"></div><div class="fv"></div><div class="fl"></div>
<span class="t tr" style="right:1954px;top:4px">16</span>
<div class="c" style="left:81px;width:80px">
<span class="t tr" style="right:3px;top:4px">130</span>
</div>
<div class="c" style="left:162px;width:377px">
<span class="t tl" style="left:3px;top:4px">hi_shared_memory_address</span>
<div class="b" style="left:353px"><i style="left:3px"></i><i style="left:9px"></i><i style="left:15px"></i></div>
</div>
<div class="c" style="left:540px;width:92px">
<span class="t tr" style="right:3px;top:4px">3</span>
</div>
<div class="c" style="left:633px;width:545px">
<span class="t tl" style="left:3px;top:4px">0</span>
<div class="b" style="left:521px"><i style="left:3px"></i><i style="left:9px"></i><i style="left:15px"></i></div>
</div>
<div class="c" style="left:1179px;width:545px">
<span class="t tl" style="left:3px;top:4px">0</span>
<div class="b" style="left:521px"><i style="left:3px"></i><i style="left:9px"></i><i style="left:15px"></i></div>
</div>
<div class="c" style="left:1725px;width:200px">
<span class="t tl" style="left:3px;top:4px">0</span>
<div class="b" style="left:176px"><i style="left:3px"></i><i style="left:9px"></i><i style="left:15px"></i></div>
</div>
<div class="c" style="left:1926px;width:119px">
<span class="t tl" style="left:3px;top:4px">TRUE</span>
</div>
<div class="hl"></div>
</div>
<div class="row odd" style="top:443px">
<div class="ind"></div><div class="rn"></div><div class="fv"></div><div class="fl"></div>
<span class="t tr" style="right:1954px;top:4px">17</span>
<div class="c" style="left:81px;width:80px">
<span class="t tr" style="right:3px;top:4px">131</span>
</div>
<div class="c" style="left:162px;width:377px">
<span class="t tl" style="left:3px;top:4px">use_indirect_data_buffers</span>
<div class="b" style="left:353px"><i style="left:3px"></i><i style="left:9px"></i><i style="left:15px"></i></div>
</div>
<div class="c" style="left:540px;width:92px">
<span class="t tr" style="right:3px;top:4px">1</span>
</div>
<div class="c" style="left:633px;width:545px">
<span class="t tl" style="left:3px;top:4px">FALSE</span>
<div class="b" style="left:521px"><i style="left:3px"></i><i style="left:9px"></i><i style="left:15px"></i></div>
</div>
<div class="c" style="left:1179px;width:545px">
<span class="t tl" style="left:3px;top:4px">FALSE</span>
<div class="b" style="left:521px"><i style="left:3px"></i><i style="left:9px"></i><i style="left:15px"></i></div>
</div>
<div class="c" style="left:1725px;width:200px">
<span class="t tl" style="left:3px;top:4px">FALSE</span>
<div class="b" style="left:176px"><i style="left:3px"></i><i style="left:9px"></i><i style="left:15px"></i></div>
</div>
<div class="c" style="left:1926px;width:119px">
<span class="t tl" style="left:3px;top:4px">TRUE</span>
</div>
<div class="hl"></div>
</div>
<div class="row even" style="top:469px">
<div class="ind"></div><div class="rn"></div><div class="fv"></div><div class="fl"></div>
<span class="t tr" style="right:1954px;top:4px">18</span>
<div class="c" style="left:81px;width:80px">
<span class="t tr" style="right:3px;top:4px">133</span>
</div>
<div class="c" style="left:162px;width:377px">
<span class="t tl" style="left:3px;top:4px">lock_sga</span>
<div class="b" style="left:353px"><i style="left:3px"></i><i style="left:9px"></i><i style="left:15px"></i></div>
</div>
<div class="c" style="left:540px;width:92px">
<span class="t tr" style="right:3px;top:4px">1</span>
</div>
<div class="c" style="left:633px;width:545px">
<span class="t tl" style="left:3px;top:4px">FALSE</span>
<div class="b" style="left:521px"><i style="left:3px"></i><i style="left:9px"></i><i style="left:15px"></i></div>
</div>
<div class="c" style="left:1179px;width:545px">
<span class="t tl" style="left:3px;top:4px">FALSE</span>
<div class="b" style="left:521px"><i style="left:3px"></i><i style="left:9px"></i><i style="left:15px"></i></div>
</div>
<div class="c" style="left:1725px;width:200px">
<span class="t tl" style="left:3px;top:4px">FALSE</span>
<div class="b" style="left:176px"><i style="left:3px"></i><i style="left:9px"></i><i style="left:15px"></i></div>
</div>
<div class="c" style="left:1926px;width:119px">
<span class="t tl" style="left:3px;top:4px">TRUE</span>
</div>
<div class="hl"></div>
</div>
<div class="row odd" style="top:495px">
<div class="ind"></div><div class="rn"></div><div class="fv"></div><div class="fl"></div>
<span class="t tr" style="right:1954px;top:4px">19</span>
<div class="c" style="left:81px;width:80px">
<span class="t tr" style="right:3px;top:4px">182</span>
</div>
<div class="c" style="left:162px;width:377px">
<span class="t tl" style="left:3px;top:4px">processor_group_name</span>
<div class="b" style="left:353px"><i style="left:3px"></i><i style="left:9px"></i><i style="left:15px"></i></div>
</div>
<div class="c" style="left:540px;width:92px">
<span class="t tr" style="right:3px;top:4px">2</span>
</div>
<div class="c n" style="left:633px;width:545px">
<div class="b" style="left:521px"><i style="left:3px"></i><i style="left:9px"></i><i style="left:15px"></i></div>
</div>
<div class="c n" style="left:1179px;width:545px">
<div class="b" style="left:521px"><i style="left:3px"></i><i style="left:9px"></i><i style="left:15px"></i></div>
</div>
<div class="c" style="left:1725px;width:200px">
<span class="t tl" style="left:3px;top:4px">NULL</span>
<div class="b" style="left:176px"><i style="left:3px"></i><i style="left:9px"></i><i style="left:15px"></i></div>
</div>
<div class="c" style="left:1926px;width:119px">
<span class="t tl" style="left:3px;top:4px">TRUE</span>
</div>
<div class="hl"></div>
</div>
<div class="row even" style="top:521px">
<div class="ind"></div><div class="rn"></div><div class="fv"></div><div class="fl"></div>
<span class="t tr" style="right:1954px;top:4px">20</span>
<div class="c" style="left:81px;width:80px">
<span class="t tr" style="right:3px;top:4px">206</span>
</div>
<div class="c" style="left:162px;width:377px">
<span class="t tl" style="left:3px;top:4px">shared_pool_size</span>
<div class="b" style="left:353px"><i style="left:3px"></i><i style="left:9px"></i><i style="left:15px"></i></div>
</div>
<div class="c" style="left:540px;width:92px">
<span class="t tr" style="right:3px;top:4px">6</span>
</div>
<div class="c" style="left:633px;width:545px">
<span class="t tl" style="left:3px;top:4px">637534208</span>
<div class="b" style="left:521px"><i style="left:3px"></i><i style="left:9px"></i><i style="left:15px"></i></div>
</div>
<div class="c" style="left:1179px;width:545px">
<span class="t tl" style="left:3px;top:4px">608M</span>
<div class="b" style="left:521px"><i style="left:3px"></i><i style="left:9px"></i><i style="left:15px"></i></div>
</div>
<div class="c" style="left:1725px;width:200px">
<span class="t tl" style="left:3px;top:4px">117440512</span>
<div class="b" style="left:176px"><i style="left:3px"></i><i style="left:9px"></i><i style="left:15px"></i></div>
</div>
<div class="c" style="left:1926px;width:119px">
<span class="t tl" style="left:3px;top:4px">FALSE</span>
</div>
<div class="hl"></div>
</div>
<div class="row odd" style="top:547px">
<div class="ind"></div><div class="rn"></div><div class="fv"></div><div class="fl"></div>
<span class="t tr" style="right:1954px;top:4px">21</span>
<div class="c" style="left:81px;width:80px">
<span class="t tr" style="right:3px;top:4px">208</span>
</div>
<div class="c" style="left:162px;width:377px">
<span class="t tl" style="left:3px;top:4px">large_pool_size</span>
<div class="b" style="left:353px"><i style="left:3px"></i><i style="left:9px"></i><i style="left:15px"></i></div>
</div>
<div class="c" style="left:540px;width:92px">
<span class="t tr" style="right:3px;top:4px">6</span>
</div>
<div class="c" style="left:633px;width:545px">
<span class="t tl" style="left:3px;top:4px">0</span>
<div class="b" style="left:521px"><i style="left:3px"></i><i style="left:9px"></i><i style="left:15px"></i></div>
</div>
<div class="c" style="left:1179px;width:545px">
<span class="t tl" style="left:3px;top:4px">0</span>
<div class="b" style="left:521px"><i style="left:3px"></i><i style="left:9px"></i><i style="left:15px"></i></div>
</div>
<div class="c" style="left:1725px;width:200px">
<span class="t tl" style="left:3px;top:4px">117440512</span>
<div class="b" style="left:176px"><i style="left:3px"></i><i style="left:9px"></i><i style="left:15px"></i></div>
</div>
<div class="c" style="left:1926px;width:119px">
<span class="t tl" style="left:3px;top:4px">TRUE</span>
</div>
<div class="hl"></div>
</div>
<div class="row even" style="top:573px">
<div class="ind"></div><div class="rn"></div><div class="fv"></div><div class="fl"></div>
<span class="t tr" style="right:1954px;top:4px">22</span>
<div class="c" style="left:81px;width:80px">
<span class="t tr" style="right:3px;top:4px">210</span>
</div>
<div class="c" style="left:162px;width:377px">
<span class="t tl" style="left:3px;top:4px">java_pool_size</span>
<div class="b" style="left:353px"><i style="left:3px"></i><i style="left:9px"></i><i style="left:15px"></i></div>
</div>
<div class="c" style="left:540px;width:92px">
<span class="t tr" style="right:3px;top:4px">6</span>
</div>
<div class="c" style="left:633px;width:545px">
<span class="t tl" style="left:3px;top:4px">0</span>
<div class="b" style="left:521px"><i style="left:3px"></i><i style="left:9px"></i><i style="left:15px"></i></div>
</div>
<div class="c" style="left:1179px;width:545px">
<span class="t tl" style="left:3px;top:4px">0</span>
<div class="b" style="left:521px"><i style="left:3px"></i><i style="left:9px"></i><i style="left:15px"></i></div>
</div>
<div class="c" style="left:1725px;width:200px">
<span class="t tl" style="left:3px;top:4px">25165824</span>
<div class="b" style="left:176px"><i style="left:3px"></i><i style="left:9px"></i><i style="left:15px"></i></div>
</div>
<div class="c" style="left:1926px;width:119px">
<span class="t tl" style="left:3px;top:4px">TRUE</span>
</div>
<div class="hl"></div>
</div>
<div class="row odd" style="top:599px">
<div class="ind"></div><div class="rn"></div><div class="fv"></div><div class="fl"></div>
<span class="t tr" style="right:1954px;top:4px">23</span>
<div class="c" style="left:81px;width:80px">
<span class="t tr" style="right:3px;top:4px">212</span>
</div>
<div class="c" style="left:162px;width:377px">
<span class="t tl" style="left:3px;top:4px">streams_pool_size</span>
<div class="b" style="left:353px"><i style="left:3px"></i><i style="left:9px"></i><i style="left:15px"></i></div>
</div>
<div class="c" style="left:540px;width:92px">
<span class="t tr" style="right:3px;top:4px">6</span>
</div>
<div class="c" style="left:633px;width:545px">
<span class="t tl" style="left:3px;top:4px">0</span>
<div class="b" style="left:521px"><i style="left:3px"></i><i style="left:9px"></i><i style="left:15px"></i></div>
</div>
<div class="c" style="left:1179px;width:545px">
<span class="t tl" style="left:3px;top:4px">0</span>
<div class="b" style="left:521px"><i style="left:3px"></i><i style="left:9px"></i><i style="left:15px"></i></div>
</div>
<div class="c" style="left:1725px;width:200px">
<span class="t tl" style="left:3px;top:4px">0</span>
<div class="b" style="left:176px"><i style="left:3px"></i><i style="left:9px"></i><i style="left:15px"></i></div>
</div>
<div class="c" style="left:1926px;width:119px">
<span class="t tl" style="left:3px;top:4px">TRUE</span>
</div>
<div class="hl"></div>
</div>
<div class="row even" style="top:625px">
<div class="ind"></div><div class="rn"></div><div class="fv"></div><div class="fl"></div>
<span class="t tr" style="right:1954px;top:4px">24</span>
<div class="c" style="left:81px;width:80px">
<span class="t tr" style="right:3px;top:4px">214</span>
</div>
<div class="c" style="left:162px;width:377px">
<span class="t tl" style="left:3px;top:4px">shared_pool_reserved_size</span>
<div class="b" style="left:353px"><i style="left:3px"></i><i style="left:9px"></i><i style="left:15px"></i></div>
</div>
<div class="c" style="left:540px;width:92px">
<span class="t tr" style="right:3px;top:4px">6</span>
</div>
<div class="c" style="left:633px;width:545px">
<span class="t tl" style="left:3px;top:4px">62914560</span>
<div class="b" style="left:521px"><i style="left:3px"></i><i style="left:9px"></i><i style="left:15px"></i></div>
</div>
<div class="c" style="left:1179px;width:545px">
<span class="t tl" style="left:3px;top:4px">60M</span>
<div class="b" style="left:521px"><i style="left:3px"></i><i style="left:9px"></i><i style="left:15px"></i></div>
</div>
<div class="c" style="left:1725px;width:200px">
<span class="t tl" style="left:3px;top:4px">0</span>
<div class="b" style="left:176px"><i style="left:3px"></i><i style="left:9px"></i><i style="left:15px"></i></div>
</div>
<div class="c" style="left:1926px;width:119px">
<span class="t tl" style="left:3px;top:4px">FALSE</span>
</div>
<div class="hl"></div>
</div>
<div class="row odd" style="top:651px">
<div class="ind"></div><div class="rn"></div><div class="fv"></div><div class="fl"></div>
<span class="t tr" style="right:1954px;top:4px">25</span>
<div class="c" style="left:81px;width:80px">
<span class="t tr" style="right:3px;top:4px">217</span>
</div>
<div class="c" style="left:162px;width:377px">
<span class="t tl" style="left:3px;top:4px">java_soft_sessionspace_limit</span>
<div class="b" style="left:353px"><i style="left:3px"></i><i style="left:9px"></i><i style="left:15px"></i></div>
</div>
<div class="c" style="left:540px;width:92px">
<span class="t tr" style="right:3px;top:4px">3</span>
</div>
<div class="c" style="left:633px;width:545px">
<span class="t tl" style="left:3px;top:4px">0</span>
<div class="b" style="left:521px"><i style="left:3px"></i><i style="left:9px"></i><i style="left:15px"></i></div>
</div>
<div class="c" style="left:1179px;width:545px">
<span class="t tl" style="left:3px;top:4px">0</span>
<div class="b" style="left:521px"><i style="left:3px"></i><i style="left:9px"></i><i style="left:15px"></i></div>
</div>
<div class="c" style="left:1725px;width:200px">
<span class="t tl" style="left:3px;top:4px">0</span>
<div class="b" style="left:176px"><i style="left:3px"></i><i style="left:9px"></i><i style="left:15px"></i></div>
</div>
<div class="c" style="left:1926px;width:119px">
<span class="t tl" style="left:3px;top:4px">TRUE</span>
</div>
<div class="hl"></div>
</div>
<div class="row even" style="top:677px">
<div class="ind"></div><div class="rn"></div><div class="fv"></div><div class="fl"></div>
<span class="t tr" style="right:1954px;top:4px">26</span>
<div class="c" style="left:81px;width:80px">
<span class="t tr" style="right:3px;top:4px">218</span>
</div>
<div class="c" style="left:162px;width:377px">
<span class="t tl" style="left:3px;top:4px">java_max_sessionspace_size</span>
<div class="b" style="left:353px"><i style="left:3px"></i><i style="left:9px"></i><i style="left:15px"></i></div>
</div>
<div class="c" style="left:540px;width:92px">
<span class="t tr" style="right:3px;top:4px">3</span>
</div>
<div class="c" style="left:633px;width:545px">
<span class="t tl" style="left:3px;top:4px">0</span>
<div class="b" style="left:521px"><i style="left:3px"></i><i style="left:9px"></i><i style="left:15px"></i></div>
</div>
<div class="c" style="left:1179px;width:545px">
<span class="t tl" style="left:3px;top:4px">0</span>
<div class="b" style="left:521px"><i style="left:3px"></i><i style="left:9px"></i><i style="left:15px"></i></div>
</div>
<div class="c" style="left:1725px;width:200px">
<span class="t tl" style="left:3px;top:4px">0</span>
<div class="b" style="left:176px"><i style="left:3px"></i><i style="left:9px"></i><i style="left:15px"></i></div>
</div>
<div class="c" style="left:1926px;width:119px">
<span class="t tl" style="left:3px;top:4px">TRUE</span>
</div>
<div class="hl"></div>
</div>
<div class="row odd" style="top:703px">
<div class="ind"></div><div class="rn"></div><div class="fv"></div><div class="fl"></div>
<span class="t tr" style="right:1954px;top:4px">27</span>
<div class="c" style="left:81px;width:80px">
<span class="t tr" style="right:3px;top:4px">220</span>
</div>
<div class="c" style="left:162px;width:377px">
<span class="t tl" style="left:3px;top:4px">pga_aggregate_limit</span>
<div class="b" style="left:353px"><i style="left:3px"></i><i style="left:9px"></i><i style="left:15px"></i></div>
</div>
<div class="c" style="left:540px;width:92px">
<span class="t tr" style="right:3px;top:4px">6</span>
</div>
<div class="c" style="left:633px;width:545px">
<span class="t tl" style="left:3px;top:4px">0</span>
<div class="b" style="left:521px"><i style="left:3px"></i><i style="left:9px"></i><i style="left:15px"></i></div>
</div>
<div class="c" style="left:1179px;width:545px">
<span class="t tl" style="left:3px;top:4px">0</span>
<div class="b" style="left:521px"><i style="left:3px"></i><i style="left:9px"></i><i style="left:15px"></i></div>
</div>
<div class="c" style="left:1725px;width:200px">
<span class="t tl" style="left:3px;top:4px">0</span>
<div class="b" style="left:176px"><i style="left:3px"></i><i style="left:9px"></i><i style="left:15px"></i></div>
</div>
<div class="c" style="left:1926px;width:119px">
<span class="t tl" style="left:3px;top:4px">FALSE</span>
</div>
<div class="hl"></div>
</div>
<div class="row even" style="top:729px">
<div class="ind"></div><div class="rn"></div><div class="fv"></div><div class="fl"></div>
<span class="t tr" style="right:1954px;top:4px">28</span>
<div class="c" style="left:81px;width:80px">
<span class="t tr" style="right:3px;top:4px">230</span>
</div>
<div class="c" style="left:162px;width:377px">
<span class="t tl" style="left:3px;top:4px">spfile</span>
<div class="b" style="left:353px"><i style="left:3px"></i><i style="left:9px"></i><i style="left:15px"></i></div>
</div>
<div class="c" style="left:540px;width:92px">
<span class="t tr" style="right:3px;top:4px">2</span>
</div>
<div class="c n" style="left:633px;width:545px">
<div class="b" style="left:521px"><i style="left:3px"></i><i style="left:9px"></i><i style="left:15px"></i></div>
</div>
<div class="c n" style="left:1179px;width:545px">
<div class="b" style="left:521px"><i style="left:3px"></i><i style="left:9px"></i><i style="left:15px"></i></div>
</div>
<div class="c" style="left:1725px;width:200px">
<span class="t tl" style="left:3px;top:4px">NONE</span>
<div class="b" style="left:176px"><i style="left:3px"></i><i style="left:9px"></i><i style="left:15px"></i></div>
</div>
<div class="c" style="left:1926px;width:119px">
<span class="t tl" style="left:3px;top:4px">TRUE</span>
</div>
<div class="hl"></div>
</div>
<div class="row odd" style="top:755px">
<div class="ind"></div><div class="rn"></div><div class="fv"></div><div class="fl"></div>
<span class="t tr" style="right:1954px;top:4px">29</span>
<div class="c" style="left:81px;width:80px">
<span class="t tr" style="right:3px;top:4px">231</span>
</div>
<div class="c" style="left:162px;width:377px">
<span class="t tl" style="left:3px;top:4px">instance_type</span>
<div class="b" style="left:353px"><i style="left:3px"></i><i style="left:9px"></i><i style="left:15px"></i></div>
</div>
<div class="c" style="left:540px;width:92px">
<span class="t tr" style="right:3px;top:4px">2</span>
</div>
<div class="c" style="left:633px;width:545px">
<span class="t tl" style="left:3px;top:4px">RDBMS</span>
<div class="b" style="left:521px"><i style="left:3px"></i><i style="left:9px"></i><i style="left:15px"></i></div>
</div>
<div class="c" style="left:1179px;width:545px">
<span class="t tl" style="left:3px;top:4px">RDBMS</span>
<div class="b" style="left:521px"><i style="left:3px"></i><i style="left:9px"></i><i style="left:15px"></i></div>
</div>
<div class="c" style="left:1725px;width:200px">
<span class="t tl" style="left:3px;top:4px">RDBMS</span>
<div class="b" style="left:176px"><i style="left:3px"></i><i style="left:9px"></i><i style="left:15px"></i></div>
</div>
<div class="c" style="left:1926px;width:119px">
<span class="t tl" style="left:3px;top:4px">TRUE</span>
</div>
<div class="hl"></div>
</div>
<div class="row even" style="top:781px">
<div class="ind"></div><div class="rn"></div><div class="fv"></div><div class="fl"></div>
<span class="t tr" style="right:1954px;top:4px">30</span>
<div class="c" style="left:81px;width:80px">
<span class="t tr" style="right:3px;top:4px">277</span>
</div>
<div class="c" style="left:162px;width:377px">
<span class="t tl" style="left:3px;top:4px">nls_language</span>
<div class="b" style="left:353px"><i style="left:3px"></i><i style="left:9px"></i><i style="left:15px"></i></div>
</div>
<div class="c" style="left:540px;width:92px">
<span class="t tr" style="right:3px;top:4px">2</span>
</div>
<div class="c" style="left:633px;width:545px">
<span class="t tl" style="left:3px;top:4px">AMERICAN</span>
<div class="b" style="left:521px"><i style="left:3px"></i><i style="left:9px"></i><i style="left:15px"></i></div>
</div>
<div class="c" style="left:1179px;width:545px">
<span class="t tl" style="left:3px;top:4px">AMERICAN</span>
<div class="b" style="left:521px"><i style="left:3px"></i><i style="left:9px"></i><i style="left:15px"></i></div>
</div>
<div class="c" style="left:1725px;width:200px">
<span class="t tl" style="left:3px;top:4px">AMERICAN</span>
<div class="b" style="left:176px"><i style="left:3px"></i><i style="left:9px"></i><i style="left:15px"></i></div>
</div>
<div class="c" style="left:1926px;width:119px">
<span class="t tl" style="left:3px;top:4px">TRUE</span>
</div>
<div class="hl"></div>
</div>
<div class="row odd" style="top:807px">
<div class="ind"></div><div class="rn"></div><div class="fv"></div><div class="fl"></div>
<span class="t tr" style="right:1954px;top:4px">31</span>
<div class="c" style="left:81px;width:80px">
<span class="t tr" style="right:3px;top:4px">278</span>
</div>
<div class="c" style="left:162px;width:377px">
<span class="t tl" style="left:3px;top:4px">nls_territory</span>
<div class="b" style="left:353px"><i style="left:3px"></i><i style="left:9px"></i><i style="left:15px"></i></div>
</div>
<div class="c" style="left:540px;width:92px">
<span class="t tr" style="right:3px;top:4px">2</span>
</div>
<div class="c" style="left:633px;width:545px">
<span class="t tl" style="left:3px;top:4px">AMERICA</span>
<div class="b" style="left:521px"><i style="left:3px"></i><i style="left:9px"></i><i style="left:15px"></i></div>
</div>
<div class="c" style="left:1179px;width:545px">
<span class="t tl" style="left:3px;top:4px">AMERICA</span>
<div class="b" style="left:521px"><i style="left:3px"></i><i style="left:9px"></i><i style="left:15px"></i></div>
</div>
<div class="c" style="left:1725px;width:200px">
<span class="t tl" style="left:3px;top:4px">AMERICA</span>
<div class="b" style="left:176px"><i style="left:3px"></i><i style="left:9px"></i><i style="left:15px"></i></div>
</div>
<div class="c" style="left:1926px;width:119px">
<span class="t tl" style="left:3px;top:4px">FALSE</span>
</div>
<div class="hl"></div>
</div>
<div class="row even" style="top:833px">
<div class="ind"></div><div class="rn"></div><div class="fv"></div><div class="fl"></div>
<span class="t tr" style="right:1954px;top:4px">32</span>
<div class="c" style="left:81px;width:80px">
<span class="t tr" style="right:3px;top:4px">279</span>
</div>
<div class="c" style="left:162px;width:377px">
<span class="t tl" style="left:3px;top:4px">nls_sort</span>
<div class="b" style="left:353px"><i style="left:3px"></i><i style="left:9px"></i><i style="left:15px"></i></div>
</div>
<div class="c" style="left:540px;width:92px">
<span class="t tr" style="right:3px;top:4px">2</span>
</div>
<div class="c" style="left:633px;width:545px">
<span class="t tl" style="left:3px;top:4px">BINARY</span>
<div class="b" style="left:521px"><i style="left:3px"></i><i style="left:9px"></i><i style="left:15px"></i></div>
</div>
<div class="c" style="left:1179px;width:545px">
<span class="t tl" style="left:3px;top:4px">BINARY</span>
<div class="b" style="left:521px"><i style="left:3px"></i><i style="left:9px"></i><i style="left:15px"></i></div>
</div>
<div class="c" style="left:1725px;width:200px">
<span class="t tl" style="left:3px;top:4px">NONE</span>
<div class="b" style="left:176px"><i style="left:3px"></i><i style="left:9px"></i><i style="left:15px"></i></div>
</div>
<div class="c" style="left:1926px;width:119px">
<span class="t tl" style="left:3px;top:4px">FALSE</span>
</div>
<div class="hl"></div>
</div>
<div class="vl" style="left:161px"></div>
<div class="vl" style="left:539px"></div>
<div class="vl" style="left:632px"></div>
<div class="vl" style="left:1178px"></div>
<div class="vl" style="left:1724px"></div>
<div class="vl" style="left:1925px"></div>
<div id="blackline"></div>
<svg class="abs" style="left:13px;top:35px" width="14" height="17" viewBox="0 0 14 17"><polygon points="0,0 11.5,10.5 4,18 0,18" fill="#000"/></svg>
</div>
</body></html>
